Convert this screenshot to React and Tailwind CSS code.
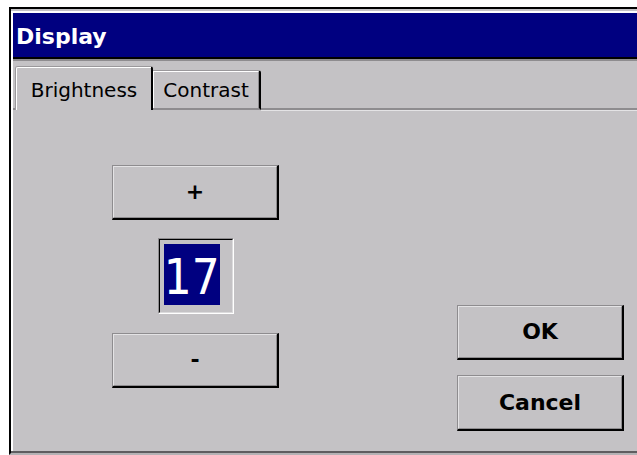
const face = 'bg-[#c4c2c5]';

// raised 3D push button in the old CE style
function Button({ children, className = '' }) {
  return (
    <div
      className={`w-[167px] h-[55px] border-t border-l border-t-[#8e8c8f] border-l-[#8e8c8f] border-r-2 border-b-2 border-r-black border-b-black ${className}`}
    >
      <div className={`h-full border-t border-l border-t-[#e4e3e5] border-l-[#e4e3e5] border-r border-b border-r-[#8e8c8f] border-b-[#8e8c8f] ${face} flex items-center justify-center text-[22px] font-bold leading-none text-black`}>
        {children}
      </div>
    </div>
  );
}

export default function App() {
  return (
    <div className="w-[637px] h-[455px] overflow-hidden bg-white pl-[9px] pt-[7px] font-['DejaVu_Sans',sans-serif]">
      {/* window frame */}
      <div className="w-[640px] h-[448px] border-t-2 border-l-2 border-t-black border-l-black border-b-2 border-b-[#b4b2b5]">
        <div className="h-full border-t-2 border-t-[#c4c2c5] border-b-2 border-b-[#5f5d60]">
          <div className={`h-full flex flex-col border-t-2 border-l-2 border-white ${face}`}>
            {/* caption */}
            <div className="h-[46px] shrink-0 bg-[#000080] border-b-2 border-black flex items-center pl-[3px] pt-[3px] text-white font-bold text-[22px] leading-none">
              Display
            </div>
            <div className="h-[2px] shrink-0 bg-[#8e8c8f]" />

            {/* tab strip */}
            <div className="h-[49px] shrink-0 flex items-end">
              <div className="w-[2px] h-[2px] border-b-2 border-[#8e8c8f]" />
              <div className="w-[138px] h-[44px] border-t border-l border-[#9a989b] border-r-2 border-r-black rounded-t-[3px]">
                <div className="h-full border-t border-l border-white rounded-tl-[2px] flex justify-center pt-[12px] text-[20px] leading-none text-black">
                  Brightness
                </div>
              </div>
              <div className="w-[108px] h-[40px] border-t border-t-[#9a989b] border-b-2 border-b-[#8e8c8f] border-r-2 border-r-black rounded-tr-[3px]">
                <div className="h-full border-t border-l border-white border-r border-r-[#8e8c8f] flex justify-center pt-[8px] text-[20px] leading-none text-black">
                  Contrast
                </div>
              </div>
              <div className="flex-1 h-[2px] border-b-2 border-[#8e8c8f] shadow-[0_1px_0_#e4e3e5]" />
            </div>

            {/* tab page */}
            <div className="flex-1 flex">
              <div className="pl-[99px] pt-[55px] flex flex-col">
                <Button>+</Button>
                <div className="self-center mt-[18px] w-[76px] h-[76px] border-t border-l border-[#8e8c8f] border-r border-b border-r-white border-b-white">
                  <div className="h-full border-t border-l border-black border-r border-b border-r-[#dcdbdd] border-b-[#dcdbdd] pt-[4px] pl-[4px]">
                    <div className="w-[56px] h-[61px] bg-[#000080] flex justify-center pt-[8px] text-white text-[50px] leading-none">
                      <span className="inline-block scale-x-[0.88]">17</span>
                    </div>
                  </div>
                </div>
                <Button className="mt-[19px]">-</Button>
              </div>

              <div className="ml-[178px] pt-[195px] flex flex-col gap-[15px]">
                <Button>OK</Button>
                <Button className="h-[56px]">Cancel</Button>
              </div>
            </div>
          </div>
        </div>
      </div>
    </div>
  );
}
